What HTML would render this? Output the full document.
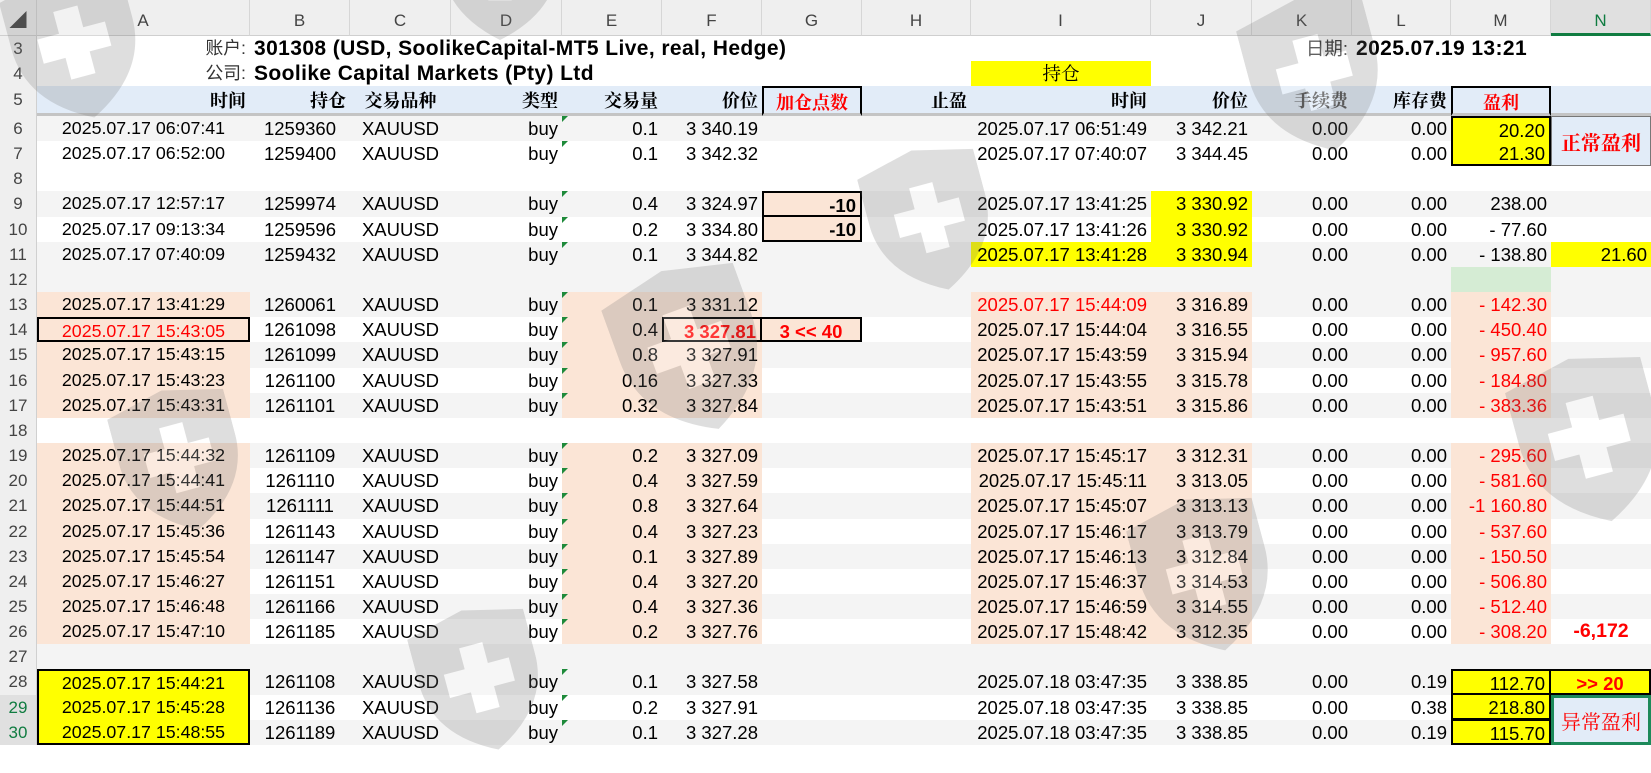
<!DOCTYPE html>
<html><head><meta charset="utf-8"><style>
*{box-sizing:border-box;margin:0;padding:0}
body{width:1651px;height:745px;overflow:hidden;background:#fff;position:relative;font-family:"Liberation Sans","Noto Sans CJK SC",sans-serif;font-size:18.5px;color:#000}
.g{display:grid;grid-template-columns:37px 213px 100px 101px 111px 100px 100px 100px 109px 180px 101px 100px 99px 100px 100px;grid-template-rows:36px 25px 25px 30px repeat(25,25.16px);position:absolute;left:0;top:0;width:1651px}
.g>div{white-space:nowrap;line-height:25px;padding:0 4px;text-align:right;position:relative;overflow:visible}
.g>div:nth-child(15n+2){text-align:center;font-size:17.8px}
.ch{background:#efefef;border-right:1px solid #d6d6d6;border-bottom:1px solid #cfcfcf;text-align:center!important;color:#444;line-height:42px!important;font-size:17px!important}
.rh{background:#efefef;border-right:1px solid #d0d0d0;text-align:center!important;color:#444;padding:0!important;font-size:17px}
.L{text-align:left!important}
.C{text-align:center!important}
.R{text-align:right!important}
.h5{background:#e2ecf8;border-bottom:3px solid #c4c4c4;font-family:"Noto Serif CJK SC",serif;font-weight:700;line-height:28px!important;font-size:18px!important}
.z{background:#f4f4f4}
.p{background:#fbe5d6}
.y{background:#ffff00}
.red{color:#f00}
.b{font-weight:700}
.bx{border:2px solid #000}
.tri:before{content:"";position:absolute;left:0;top:0;border-top:6px solid #1e8a3a;border-right:6px solid transparent}
.cj{font-family:"Noto Serif CJK SC",serif;font-weight:700}
.ov{position:absolute;left:0;right:0;text-align:center;font-size:20px;z-index:5}
.wm{position:absolute;opacity:.22;pointer-events:none;z-index:10}
.big{font-size:21px;letter-spacing:.4px}
</style></head><body>
<div class="g">
<div class="ch" style="font-size:10px">◢</div><div class="ch">A</div><div class="ch">B</div><div class="ch">C</div><div class="ch">D</div><div class="ch">E</div><div class="ch">F</div><div class="ch">G</div><div class="ch">H</div><div class="ch">I</div><div class="ch">J</div><div class="ch">K</div><div class="ch">L</div><div class="ch">M</div><div class="ch" style="background:#e0e0e0;color:#107c41;border-bottom:3px solid #107c41">N</div>

<div class="rh">3</div><div class="R"><span style="color:#333">账户:</span></div><div class="L b big">301308 (USD, SoolikeCapital-MT5 Live, real, Hedge)</div><div></div><div></div><div></div><div></div><div></div><div></div><div></div><div></div><div><span style="color:#333">日期:</span></div><div class="L b big">2025.07.19 13:21</div><div></div><div></div>
<div class="rh">4</div><div class="R"><span style="color:#333">公司:</span></div><div class="L b big">Soolike Capital Markets (Pty) Ltd</div><div></div><div></div><div></div><div></div><div></div><div></div><div class="y C cj" style="font-weight:400">持仓</div><div></div><div></div><div></div><div></div><div></div>
<div class="rh" style="line-height:28px">5</div><div class="h5 R">时间</div><div class="h5">持仓</div><div class="h5 C">交易品种</div><div class="h5">类型</div><div class="h5">交易量</div><div class="h5">价位</div><div class="h5 red C" style="border:2px solid #000;border-bottom:3px solid #c4c4c4">加仓点数</div><div class="h5">止盈</div><div class="h5">时间</div><div class="h5">价位</div><div class="h5" style="color:#555">手续费</div><div class="h5">库存费</div><div class="h5 red C" style="border:2px solid #000;border-bottom:3px solid #c4c4c4">盈利</div><div class="h5"></div>

<div class="rh">6</div><div class="z">2025.07.17 06:07:41</div><div class="z C">1259360</div><div class="z C">XAUUSD</div><div class="z">buy</div><div class="z tri">0.1</div><div class="z">3 340.19</div><div class="z"></div><div class="z"></div><div class="z">2025.07.17 06:51:49</div><div class="z">3 342.21</div><div class="z">0.00</div><div class="z">0.00</div><div class="y" style="border:2px solid #000;border-bottom:0">20.20</div><div style="background:#e2ecf8;border:1px solid #777;border-bottom:0"><span class="red cj ov" style="top:12px">正常盈利</span></div>
<div class="rh">7</div><div>2025.07.17 06:52:00</div><div class="C">1259400</div><div class="C">XAUUSD</div><div>buy</div><div class="tri">0.1</div><div>3 342.32</div><div></div><div></div><div>2025.07.17 07:40:07</div><div>3 344.45</div><div>0.00</div><div>0.00</div><div class="y" style="border:2px solid #000;border-top:0">21.30</div><div style="background:#e2ecf8;border:1px solid #777;border-top:0"></div>
<div class="rh">8</div><div></div><div></div><div></div><div></div><div></div><div></div><div></div><div></div><div></div><div></div><div></div><div></div><div></div><div></div>
<div class="rh">9</div><div class="z">2025.07.17 12:57:17</div><div class="z C">1259974</div><div class="z C">XAUUSD</div><div class="z">buy</div><div class="z tri">0.4</div><div class="z">3 324.97</div><div class="p b bx">-10</div><div class="z"></div><div class="z">2025.07.17 13:41:25</div><div class="y">3 330.92</div><div class="z">0.00</div><div class="z">0.00</div><div class="z">238.00</div><div class="z"></div>
<div class="rh">10</div><div>2025.07.17 09:13:34</div><div class="C">1259596</div><div class="C">XAUUSD</div><div>buy</div><div class="tri">0.2</div><div>3 334.80</div><div class="p b bx" style="border-top:0">-10</div><div></div><div>2025.07.17 13:41:26</div><div class="y">3 330.92</div><div>0.00</div><div>0.00</div><div>- 77.60</div><div></div>
<div class="rh">11</div><div class="z">2025.07.17 07:40:09</div><div class="z C">1259432</div><div class="z C">XAUUSD</div><div class="z">buy</div><div class="z tri">0.1</div><div class="z">3 344.82</div><div class="z"></div><div class="z"></div><div class="y">2025.07.17 13:41:28</div><div class="y">3 330.94</div><div class="z">0.00</div><div class="z">0.00</div><div class="z">- 138.80</div><div class="y">21.60</div>
<div class="rh">12</div><div class="z"></div><div class="z"></div><div class="z"></div><div class="z"></div><div class="z"></div><div class="z"></div><div class="z"></div><div class="z"></div><div class="z"></div><div class="z"></div><div class="z"></div><div class="z"></div><div style="background:#d5ecd4"></div><div class="z"></div>
<div class="rh">13</div><div class="p">2025.07.17 13:41:29</div><div class="z C">1260061</div><div class="z C">XAUUSD</div><div class="z">buy</div><div class="p tri">0.1</div><div class="p">3 331.12</div><div class="z"></div><div class="z"></div><div class="p red">2025.07.17 15:44:09</div><div class="p">3 316.89</div><div class="z">0.00</div><div class="z">0.00</div><div class="p red">- 142.30</div><div class="z"></div>
<div class="rh">14</div><div class="p red bx">2025.07.17 15:43:05</div><div class="C">1261098</div><div class="C">XAUUSD</div><div>buy</div><div class="p tri">0.4</div><div class="p red b bx">3 327.81</div><div class="p red b bx C" style="border-left:0">3 &lt;&lt; 40</div><div></div><div class="p">2025.07.17 15:44:04</div><div class="p">3 316.55</div><div>0.00</div><div>0.00</div><div class="p red">- 450.40</div><div></div>
<div class="rh">15</div><div class="p">2025.07.17 15:43:15</div><div class="z C">1261099</div><div class="z C">XAUUSD</div><div class="z">buy</div><div class="p tri">0.8</div><div class="p">3 327.91</div><div class="z"></div><div class="z"></div><div class="p">2025.07.17 15:43:59</div><div class="p">3 315.94</div><div class="z">0.00</div><div class="z">0.00</div><div class="p red">- 957.60</div><div class="z"></div>
<div class="rh">16</div><div class="p">2025.07.17 15:43:23</div><div class="C">1261100</div><div class="C">XAUUSD</div><div>buy</div><div class="p tri">0.16</div><div class="p">3 327.33</div><div></div><div></div><div class="p">2025.07.17 15:43:55</div><div class="p">3 315.78</div><div>0.00</div><div>0.00</div><div class="p red">- 184.80</div><div></div>
<div class="rh">17</div><div class="p">2025.07.17 15:43:31</div><div class="z C">1261101</div><div class="z C">XAUUSD</div><div class="z">buy</div><div class="p tri">0.32</div><div class="p">3 327.84</div><div class="z"></div><div class="z"></div><div class="p">2025.07.17 15:43:51</div><div class="p">3 315.86</div><div class="z">0.00</div><div class="z">0.00</div><div class="p red">- 383.36</div><div class="z"></div>
<div class="rh">18</div><div></div><div></div><div></div><div></div><div></div><div></div><div></div><div></div><div></div><div></div><div></div><div></div><div></div><div></div>
<div class="rh">19</div><div class="p">2025.07.17 15:44:32</div><div class="z C">1261109</div><div class="z C">XAUUSD</div><div class="z">buy</div><div class="p tri">0.2</div><div class="p">3 327.09</div><div class="z"></div><div class="z"></div><div class="p">2025.07.17 15:45:17</div><div class="p">3 312.31</div><div class="z">0.00</div><div class="z">0.00</div><div class="p red">- 295.60</div><div class="z"></div>
<div class="rh">20</div><div class="p">2025.07.17 15:44:41</div><div class="C">1261110</div><div class="C">XAUUSD</div><div>buy</div><div class="p tri">0.4</div><div class="p">3 327.59</div><div></div><div></div><div class="p">2025.07.17 15:45:11</div><div class="p">3 313.05</div><div>0.00</div><div>0.00</div><div class="p red">- 581.60</div><div></div>
<div class="rh">21</div><div class="p">2025.07.17 15:44:51</div><div class="z C">1261111</div><div class="z C">XAUUSD</div><div class="z">buy</div><div class="p tri">0.8</div><div class="p">3 327.64</div><div class="z"></div><div class="z"></div><div class="p">2025.07.17 15:45:07</div><div class="p">3 313.13</div><div class="z">0.00</div><div class="z">0.00</div><div class="p red">-1 160.80</div><div class="z"></div>
<div class="rh">22</div><div class="p">2025.07.17 15:45:36</div><div class="C">1261143</div><div class="C">XAUUSD</div><div>buy</div><div class="p tri">0.4</div><div class="p">3 327.23</div><div></div><div></div><div class="p">2025.07.17 15:46:17</div><div class="p">3 313.79</div><div>0.00</div><div>0.00</div><div class="p red">- 537.60</div><div></div>
<div class="rh">23</div><div class="p">2025.07.17 15:45:54</div><div class="z C">1261147</div><div class="z C">XAUUSD</div><div class="z">buy</div><div class="p tri">0.1</div><div class="p">3 327.89</div><div class="z"></div><div class="z"></div><div class="p">2025.07.17 15:46:13</div><div class="p">3 312.84</div><div class="z">0.00</div><div class="z">0.00</div><div class="p red">- 150.50</div><div class="z"></div>
<div class="rh">24</div><div class="p">2025.07.17 15:46:27</div><div class="C">1261151</div><div class="C">XAUUSD</div><div>buy</div><div class="p tri">0.4</div><div class="p">3 327.20</div><div></div><div></div><div class="p">2025.07.17 15:46:37</div><div class="p">3 314.53</div><div>0.00</div><div>0.00</div><div class="p red">- 506.80</div><div></div>
<div class="rh">25</div><div class="p">2025.07.17 15:46:48</div><div class="z C">1261166</div><div class="z C">XAUUSD</div><div class="z">buy</div><div class="p tri">0.4</div><div class="p">3 327.36</div><div class="z"></div><div class="z"></div><div class="p">2025.07.17 15:46:59</div><div class="p">3 314.55</div><div class="z">0.00</div><div class="z">0.00</div><div class="p red">- 512.40</div><div class="z"></div>
<div class="rh">26</div><div class="p">2025.07.17 15:47:10</div><div class="C">1261185</div><div class="C">XAUUSD</div><div>buy</div><div class="p tri">0.2</div><div class="p">3 327.76</div><div></div><div></div><div class="p">2025.07.17 15:48:42</div><div class="p">3 312.35</div><div>0.00</div><div>0.00</div><div class="p red">- 308.20</div><div class="red b C" style="font-size:19.5px">-6,172</div>
<div class="rh">27</div><div class="z"></div><div class="z"></div><div class="z"></div><div class="z"></div><div class="z"></div><div class="z"></div><div class="z"></div><div class="z"></div><div class="z"></div><div class="z"></div><div class="z"></div><div class="z"></div><div class="z"></div><div class="z"></div>
<div class="rh">28</div><div class="y" style="border:2px solid #000;border-bottom:0">2025.07.17 15:44:21</div><div class="z C">1261108</div><div class="z C">XAUUSD</div><div class="z">buy</div><div class="z tri">0.1</div><div class="z">3 327.58</div><div class="z"></div><div class="z"></div><div class="z">2025.07.18 03:47:35</div><div class="z">3 338.85</div><div class="z">0.00</div><div class="z">0.19</div><div class="y bx">112.70</div><div class="y red b C bx" style="border-left:0">&gt;&gt; 20</div>
<div class="rh" style="color:#107c41;background:#e0e0e0">29</div><div class="y" style="border-left:2px solid #000;border-right:2px solid #000">2025.07.17 15:45:28</div><div class="C">1261136</div><div class="C">XAUUSD</div><div>buy</div><div class="tri">0.2</div><div>3 327.91</div><div></div><div></div><div>2025.07.18 03:47:35</div><div>3 338.85</div><div>0.00</div><div>0.38</div><div class="y" style="border:2px solid #000;border-top:0">218.80</div><div style="background:#e2ecf8;border:3px solid #1d8a5a;border-bottom:0"><span class="red cj ov" style="top:10px;font-weight:400">异常盈利</span></div>
<div class="rh" style="color:#107c41;background:#e0e0e0">30</div><div class="y" style="border:2px solid #000;border-top:0">2025.07.17 15:48:55</div><div class="z C">1261189</div><div class="z C">XAUUSD</div><div class="z">buy</div><div class="z tri">0.1</div><div class="z">3 327.28</div><div class="z"></div><div class="z"></div><div class="z">2025.07.18 03:47:35</div><div class="z">3 338.85</div><div class="z">0.00</div><div class="z">0.19</div><div class="y" style="border:2px solid #000;border-top:1px solid #000">115.70</div><div style="background:#e2ecf8;border:3px solid #1d8a5a;border-top:0"></div>
</div>

<svg width="0" height="0" style="position:absolute"><defs><g id="sh"><path d="M50 0 L100 12 L100 50 Q100 95 50 120 Q0 95 0 50 L0 12 Z" fill="#6f6f6f"/><path d="M40 30 h20 v18 h18 v20 h-18 v18 h-20 v-18 h-18 v-20 h18 z" fill="#fff"/></g></defs></svg>
<svg class="wm" style="left:10px;top:-30px;transform:rotate(-15deg)" width="130" height="150" viewBox="0 0 100 120"><use href="#sh"/></svg>
<svg class="wm" style="left:440px;top:-100px" width="120" height="140" viewBox="0 0 100 120"><use href="#sh"/></svg>
<svg class="wm" style="left:620px;top:260px;transform:rotate(-20deg)" width="140" height="180" viewBox="0 0 100 120"><use href="#sh"/></svg>
<svg class="wm" style="left:870px;top:140px;transform:rotate(-15deg)" width="120" height="160" viewBox="0 0 100 120"><use href="#sh"/></svg>
<svg class="wm" style="left:1250px;top:-10px;transform:rotate(-15deg)" width="130" height="170" viewBox="0 0 100 120"><use href="#sh"/></svg>
<svg class="wm" style="left:1520px;top:350px;transform:rotate(-15deg)" width="140" height="180" viewBox="0 0 100 120"><use href="#sh"/></svg>
<svg class="wm" style="left:1140px;top:490px;transform:rotate(-15deg)" width="130" height="170" viewBox="0 0 100 120"><use href="#sh"/></svg>
<svg class="wm" style="left:120px;top:380px;transform:rotate(-15deg)" width="120" height="160" viewBox="0 0 100 120"><use href="#sh"/></svg>
<svg class="wm" style="left:420px;top:600px;transform:rotate(-15deg)" width="120" height="160" viewBox="0 0 100 120"><use href="#sh"/></svg>
</body></html>
